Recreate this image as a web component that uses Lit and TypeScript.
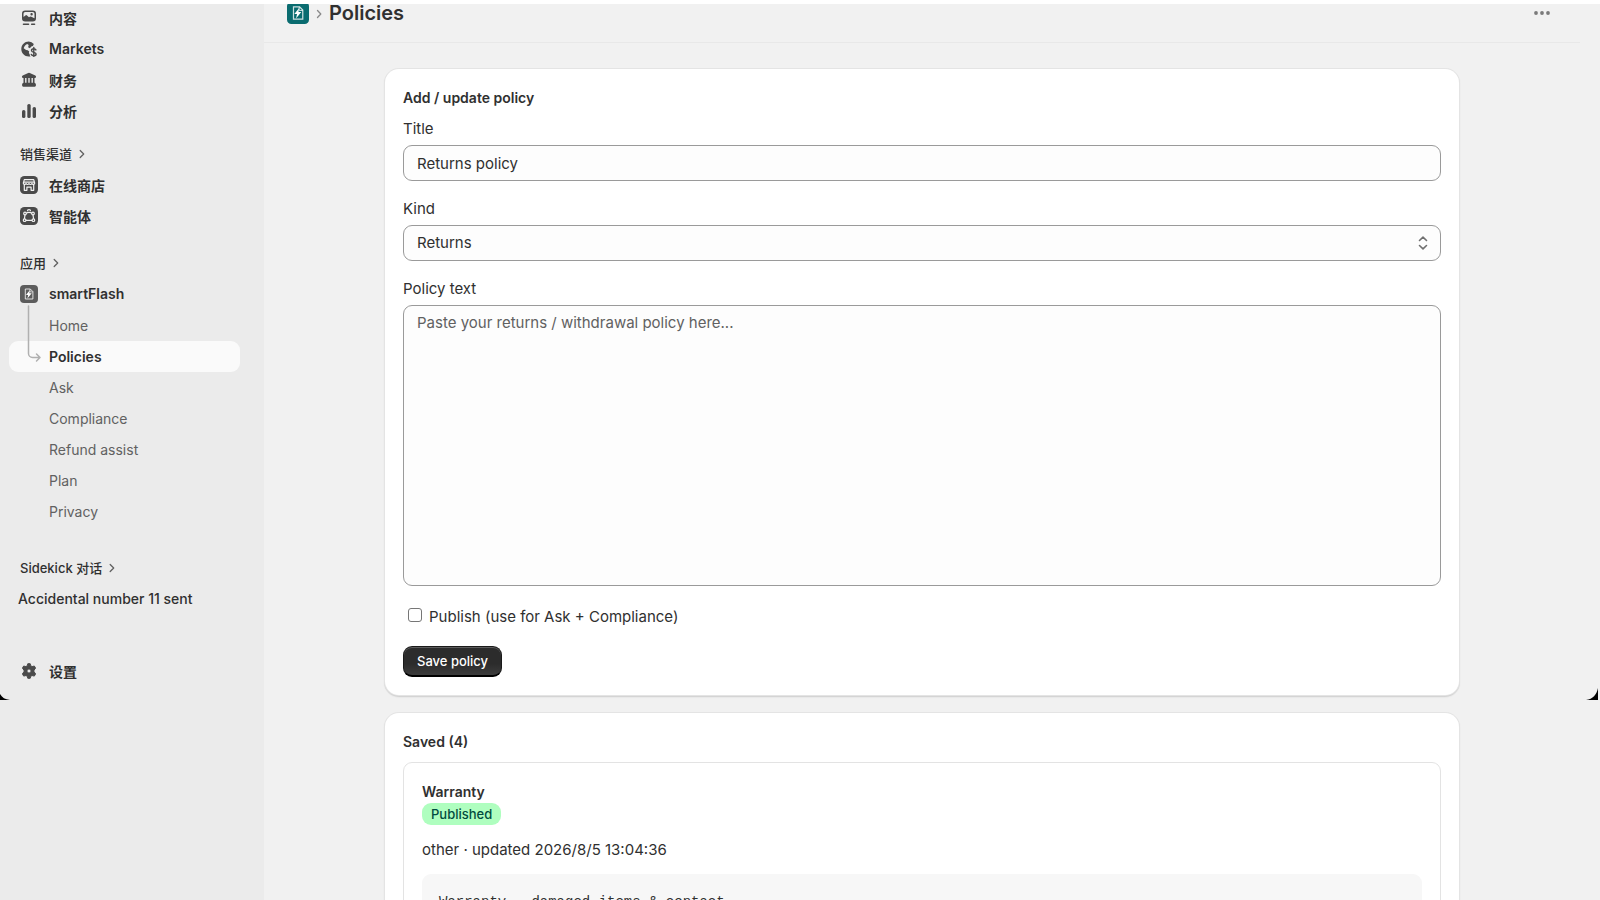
import { LitElement, html, css, svg, nothing, TemplateResult } from "lit";
import { customElement, property } from "lit/decorators.js";

interface NavItem {
  label: string;
  icon?: TemplateResult;
}

const icons = {
  content: svg`<path fill-rule="evenodd" d="M4.200 .6h7.600A3.200 3.200 0 0 1 15 3.800v4.500A3.200 3.200 0 0 1 11.800 11.500H4.200A3.200 3.200 0 0 1 1 8.300V3.800A3.200 3.200 0 0 1 4.200.6Zm0 1.500A1.700 1.700 0 0 0 2.500 3.800v3.200l1.900-1.600a1.200 1.200 0 0 1 1.600 0l2 1.900.8-.6a1.200 1.200 0 0 1 1.500 0l3.200 1.600V3.800a1.700 1.700 0 0 0-1.700-1.700ZM10.600 3a1.200 1.200 0 1 1 0 2.400 1.200 1.200 0 0 1 0-2.400Z"/><path d="M2.500 13.500h5a.8.8 0 0 1 0 1.600h-5a.8.8 0 0 1 0-1.600Zm8.200 0h2.800a.8.8 0 0 1 0 1.600h-2.800a.8.8 0 0 1 0-1.600Z"/>`,
  markets: svg`<path d="M7.800.5C3.600.5.300 3.800.300 8s3.300 7.500 7.500 7.500c.7 0 1.300-.1 1.900-.2-.8-.5-1.100-1.300-1-2.100-.9-.9-1-1.800-.5-2.700L6.700 9.300 5.100 9 2.700 7.300c.4-2 1.700-3.600 3.500-4.400L7.700 4l-.6 2.200 1.800 1 1.400-1.800 1.600-.4.900-2A7.400 7.400 0 0 0 7.800.5Z"/><path d="M14.900 8.900c-.4-.8-1.200-1.200-2.200-1.200-1.300 0-2.200.7-2.200 1.800 0 2.500 4.600 1.200 4.600 3.500 0 1.100-1 1.800-2.300 1.800-1.200 0-2.100-.5-2.500-1.400M12.800 6.500v9.300" fill="none" stroke="currentColor" stroke-width="1.400" stroke-linecap="round"/>`,
  finance: svg`<path d="M7.200 1a2 2 0 0 1 1.600 0l5.500 2.500c1.300.6.900 2.500-.5 2.500H13.500v4.800c.8.200 1.400.9 1.400 1.800v1a1.100 1.100 0 0 1-1.100 1.100H2.200a1.100 1.100 0 0 1-1.100-1.100v-1c0-.9.600-1.600 1.400-1.800V6H2.200C.8 6 .400 4.100 1.700 3.500ZM4.100 6v4.700h1.400V6Zm3.200 0v4.700h1.400V6Zm3.200 0v4.700h1.400V6Z"/>`,
  analytics: svg`<rect x="1" y="7" width="3.400" height="8" rx="1.600"/><rect x="6.300" y="1" width="3.400" height="14" rx="1.600"/><rect x="11.600" y="4" width="3.400" height="11" rx="1.600"/>`,
  settings: svg`<path fill-rule="evenodd" d="M6.800.7h2.400l.6 2.200 1.300.7 2.200-.6 1.200 2-.1.500-1.400 1.600v1.800l1.500 1.600v.5l-1.200 2.100-2.300-.6-1.200.7-.6 2.100H6.800l-.6-2.100-1.200-.7-2.300.6-1.200-2.100v-.5L3 8.900V7.100L1.600 5.500l-.1-.5 1.200-2 2.200.6 1.300-.7ZM8 5.900a2.100 2.100 0 1 0 0 4.200 2.100 2.100 0 0 0 0-4.200Z" stroke="currentColor" stroke-width="1" stroke-linejoin="round"/>`,
};

const storeIcon = svg`<rect width="18" height="18" rx="4.500" fill="#4a4a4a"/><g fill="none" stroke="#f1f1f1" stroke-width="1.200" stroke-linejoin="round"><path d="M4.300 3.700h9.400l1 3.400a1.500 1.500 0 0 1-2.800.5 1.600 1.600 0 0 1-2.900 0 1.600 1.600 0 0 1-2.900 0 1.500 1.500 0 0 1-2.800-.5ZM3.700 6.200h10.600M4.300 8.800v5.500h2.600v-3.200h4.200v3.200h2.600V8.800"/></g>`;
const agentIcon = svg`<rect width="18" height="18" rx="4.500" fill="#4a4a4a"/><g fill="none" stroke="#f1f1f1" stroke-width="1.200"><path d="M6 6.200c2-1 4-1 6 0M5 7.800 4.400 11.800M13 7.800l.6 4M6 13.300h6M7.400 4.200a1.600 1.600 0 0 1 3.200 0"/><circle cx="5" cy="6.500" r="1.300"/><circle cx="13" cy="6.500" r="1.300"/><circle cx="4.600" cy="13.200" r="1.300"/><circle cx="13.400" cy="13.200" r="1.300"/></g>`;
const flashMark = svg`<path d="M5.300 4h5l2.600 2.600V14H5.300Z" fill="none" stroke="#fff" stroke-opacity=".8" stroke-width="1"/><path d="M10 4v2.900h2.900" fill="none" stroke="#fff" stroke-opacity=".8" stroke-width=".8"/><path d="M9.900 5 6 9.900h2.200L7.400 13.400l4.300-5.200H9.400Z" fill="#fff"/>`;

const mainNav: NavItem[] = [
  { label: "内容", icon: icons.content },
  { label: "Markets", icon: icons.markets },
  { label: "财务", icon: icons.finance },
  { label: "分析", icon: icons.analytics },
];
const channels: NavItem[] = [
  { label: "在线商店", icon: storeIcon },
  { label: "智能体", icon: agentIcon },
];
const appPages = ["Home", "Policies", "Ask", "Compliance", "Refund assist", "Plan", "Privacy"];

@customElement("side-nav")
export class SideNav extends LitElement {
  @property() current = "Policies";

  static styles = css`
    :host {
      display: block;
      box-sizing: border-box;
      background: #ebebeb;
      color: #303030;
      font-size: 14px;
    }
    .nav {
      display: flex;
      flex-direction: column;
      padding: 0 24px 0 9px;
      margin-top: -2px;
    }
    .group {
      display: flex;
      flex-direction: column;
      margin: 0 0 12px;
      padding: 0;
      list-style: none;
    }
    .group.channels {
      margin-bottom: 16px;
    }
    .group.apps {
      margin-bottom: 25px;
    }
    .group.chats {
      margin-bottom: 41px;
    }
    .item,
    .heading {
      display: flex;
      align-items: center;
      height: 31px;
      border-radius: 9px;
      color: inherit;
      text-decoration: none;
      font-weight: 600;
    }
    .item {
      padding-left: 11px;
      gap: 11px;
    }
    .heading {
      padding-left: 11px;
      gap: 6px;
      font-size: 13px;
      font-weight: 500;
    }
    .icon {
      display: grid;
      place-items: center;
      width: 18px;
      height: 18px;
      color: #4a4a4a;
    }
    .sub {
      padding-left: 40px;
      color: #616161;
      font-weight: 400;
    }
    .sub.active {
      background: #fafafa;
      color: #303030;
      font-weight: 600;
    }
    .chat {
      padding-left: 9px;
      font-weight: 500;
    }
    .tree {
      position: relative;
      margin-top: 1px;
    }
    .branch {
      position: absolute;
      left: 18px;
      top: -5px;
      pointer-events: none;
    }
  `;

  private heading(label: string) {
    return html`<li><a class="heading" href="#">${label}
      <svg width="8" height="10" viewBox="0 0 8 10" fill="none" stroke="#616161" stroke-width="1.300" stroke-linecap="round" stroke-linejoin="round" aria-hidden="true"><path d="M2.200 1.500 5.700 5 2.200 8.500"/></svg></a></li>`;
  }

  private glyph(icon: TemplateResult | undefined, size: number) {
    return html`<span class="icon"><svg width=${size} height=${size} viewBox="0 0 ${size} ${size}" fill="currentColor" aria-hidden="true">${icon}</svg></span>`;
  }

  render() {
    return html`<nav class="nav">
      <ul class="group">
        ${mainNav.map((n) => html`<li><a class="item" href="#">${this.glyph(n.icon, 16)}${n.label}</a></li>`)}
      </ul>
      <ul class="group channels">
        ${this.heading("销售渠道")}
        ${channels.map((n) => html`<li><a class="item" href="#">${this.glyph(n.icon, 18)}${n.label}</a></li>`)}
      </ul>
      <ul class="group apps">
        ${this.heading("应用")}
        <li><a class="item" href="#">${this.glyph(svg`<rect width="18" height="18" rx="4" fill="#5c5c5c"/>${flashMark}`, 18)}smartFlash</a></li>
        <li class="tree">
          ${appPages.map((p) => html`<a class="item sub ${p === this.current ? "active" : ""}" href="#" aria-current=${p === this.current ? "page" : nothing}>${p}</a>`)}
          <svg class="branch" width="24" height="58" viewBox="0 0 24 58" fill="none" stroke="#b0b0b0" stroke-width="1.500" stroke-linecap="round" stroke-linejoin="round" aria-hidden="true"><path d="M10.500 1v47.500a4 4 0 0 0 4 4h7M18.500 49l3.500 3.500L18.500 56" transform="translate(-9)"/></svg>
        </li>
      </ul>
      <ul class="group chats">
        ${this.heading("Sidekick 对话")}
        <li><a class="item chat" href="#">Accidental number 11 sent</a></li>
      </ul>
      <a class="item" href="#">${this.glyph(icons.settings, 16)}设置</a>
    </nav>`;
  }
}

@customElement("policies-page")
export class PoliciesPage extends LitElement {
  static styles = css`
    :host {
      display: block;
      min-width: 0;
      padding-right: 20px;
      background: #f1f1f1;
      color: #303030;
      font-size: 15px;
      line-height: 22px;
    }
    .bar {
      display: flex;
      align-items: center;
      height: 41px;
      margin-top: -2px;
      padding: 0 27px 0 23px;
      box-sizing: border-box;
      border-bottom: 1px solid #e8e8e8;
      gap: 6px;
    }
    .crumb {
      display: flex;
      align-items: flex-start;
      align-self: flex-start;
      gap: 6px;
      flex: 1;
    }
    .crumb svg {
      display: block;
    }
    .crumb .sep {
      margin-top: 6px;
    }
    h1 {
      margin: 0;
      font-size: 20px;
      line-height: 22px;
      font-weight: 600;
    }
    .more {
      display: grid;
      place-items: center;
      align-self: flex-start;
      width: 22px;
      height: 22px;
      padding: 0;
      border: 0;
      background: none;
      color: #7a7a7a;
    }
    .stack {
      display: flex;
      flex-direction: column;
      gap: 18px;
      max-width: 1074px;
      margin: 26px auto 0;
      padding: 0 18px;
    }
    .card {
      display: flex;
      flex-direction: column;
      padding: 18px;
      border-radius: 14px;
      background: #fff;
      box-shadow: 0 0 0 1px #e4e4e4, 0 1px 1px 1px #d2d2d2, 0 3px 2px -1px #e0e0e0;
    }
    h2,
    h3 {
      margin: 0;
      font-size: 14px;
      font-weight: 600;
    }
    h2 {
      margin-bottom: 9px;
    }
    .field {
      display: flex;
      flex-direction: column;
      gap: 5px;
      margin-bottom: 17px;
    }
    .control {
      box-sizing: border-box;
      width: 100%;
      height: 36px;
      margin: 0;
      padding: 0 13px;
      border: 1px solid #9a9a9a;
      border-radius: 9px;
      background: #fdfdfd;
      color: #303030;
      font: inherit;
      appearance: none;
      outline: none;
    }
    .area {
      display: block;
      height: 281px;
      padding: 6px 13px;
      resize: none;
    }
    .area::placeholder {
      color: #616161;
      opacity: 1;
    }
    .pick {
      display: grid;
      align-items: center;
    }
    .pick > * {
      grid-area: 1 / 1;
    }
    .pick svg {
      justify-self: end;
      margin-right: 13px;
      pointer-events: none;
    }
    .check {
      display: flex;
      align-items: center;
      gap: 7px;
      margin: 3px 0 18px;
      padding-left: 5px;
    }
    .check input {
      appearance: none;
      width: 14px;
      height: 14px;
      margin: 0 0 4px;
      border: 1px solid #767676;
      border-radius: 3px;
      background: #fff;
    }
    .save {
      align-self: flex-start;
      height: 31px;
      padding: 0 13px;
      border: 1px solid #1a1a1a;
      border-bottom: 2px solid #000;
      border-radius: 9px;
      background: linear-gradient(#2c2c2c 60%, #3c3c3c);
      box-shadow: inset 0 1px 0 #5c5c5c;
      color: #fff;
      font: 500 13px/20px Inter, "Noto Sans CJK SC", sans-serif;
    }
    .policy {
      padding: 18px;
      border: 1px solid #e3e3e3;
      border-radius: 9px;
    }
    .badge {
      display: block;
      width: fit-content;
      padding: 0 9px;
      border-radius: 9px;
      background: #affebf;
      color: #014b40;
      font-size: 13px;
      font-weight: 500;
    }
    .meta {
      margin: 14px 0 13px;
    }
    .body {
      margin: 0;
      padding: 18px 17px;
      border-radius: 9px;
      background: #f7f7f7;
      font: 14px/20px "Liberation Mono", monospace;
    }
  `;

  render() {
    return html`
      <header class="bar">
        <div class="crumb">
          <svg width="22" height="22" viewBox="0 0 18 18" aria-hidden="true"><rect width="18" height="18" rx="3.500" fill="#0a6c70"/>${flashMark}</svg>
          <svg class="sep" width="8" height="12" viewBox="0 0 8 12" fill="none" stroke="#8a8a8a" stroke-width="1.300" stroke-linecap="round" stroke-linejoin="round" aria-hidden="true"><path d="M2.500 2.500 5.800 6 2.500 9.500"/></svg>
          <h1>Policies</h1>
        </div>
        <button class="more" type="button" aria-label="More actions">
          <svg width="18" height="4" viewBox="0 0 18 4" fill="currentColor" aria-hidden="true"><circle cx="3" cy="2" r="1.900"/><circle cx="9" cy="2" r="1.900"/><circle cx="15" cy="2" r="1.900"/></svg>
        </button>
      </header>
      <main class="stack">
        <form class="card">
          <h2>Add / update policy</h2>
          <div class="field">
            <label for="title">Title</label>
            <input class="control" id="title" type="text" .value=${"Returns policy"} />
          </div>
          <div class="field">
            <label for="kind">Kind</label>
            <div class="pick">
              <select class="control" id="kind"><option>Returns</option></select>
              <svg width="10" height="14" viewBox="0 0 10 14" fill="none" stroke="#707070" stroke-width="1.600" stroke-linecap="round" stroke-linejoin="round" aria-hidden="true"><path d="M1.500 4.500 5 1.200l3.500 3.300M1.500 9.500 5 12.800l3.500-3.300"/></svg>
            </div>
          </div>
          <div class="field">
            <label for="text">Policy text</label>
            <textarea class="control area" id="text" placeholder="Paste your returns / withdrawal policy here..."></textarea>
          </div>
          <label class="check"><input type="checkbox" />Publish (use for Ask + Compliance)</label>
          <button class="save" type="button">Save policy</button>
        </form>
        <section class="card">
          <h2>Saved (4)</h2>
          <article class="policy">
            <h3>Warranty</h3>
            <span class="badge">Published</span>
            <p class="meta">other · updated 2026/8/5 13:04:36</p>
            <pre class="body">Warranty – damaged items &amp; contact</pre>
          </article>
        </section>
      </main>
    `;
  }
}

@customElement("app-root")
export class AppRoot extends LitElement {
  static styles = css`
    :host {
      display: block;
      position: relative;
      height: 100vh;
      overflow: hidden;
      background: #fff;
      font-family: Inter, "Noto Sans CJK SC", sans-serif;
    }
    .strip {
      position: relative;
      z-index: 1;
      height: 4px;
      background: #fff;
    }
    .layout {
      display: grid;
      grid-template-columns: 264px minmax(0, 1fr);
      height: calc(100% - 4px);
    }
    .scroll {
      display: flow-root;
      overflow: hidden;
      background: #ebebeb;
    }
    .page {
      background: #f1f1f1;
    }
    .corner {
      position: absolute;
      top: 688px;
    }
    .left {
      left: 0;
    }
    .right {
      right: 2px;
    }
  `;

  render() {
    return html`
      <div class="strip"></div>
      <div class="layout">
        <div class="scroll"><side-nav></side-nav></div>
        <div class="scroll page"><policies-page></policies-page></div>
      </div>
      <svg class="corner left" width="12" height="12" viewBox="0 0 12 12" aria-hidden="true"><path d="M0 6c2 3.500 5 5.500 10 6H0Z"/></svg>
      <svg class="corner right" width="12" height="12" viewBox="0 0 12 12" aria-hidden="true"><path d="M12 0c-1.500 7-5 11-12 12h12Z"/></svg>
    `;
  }
}
